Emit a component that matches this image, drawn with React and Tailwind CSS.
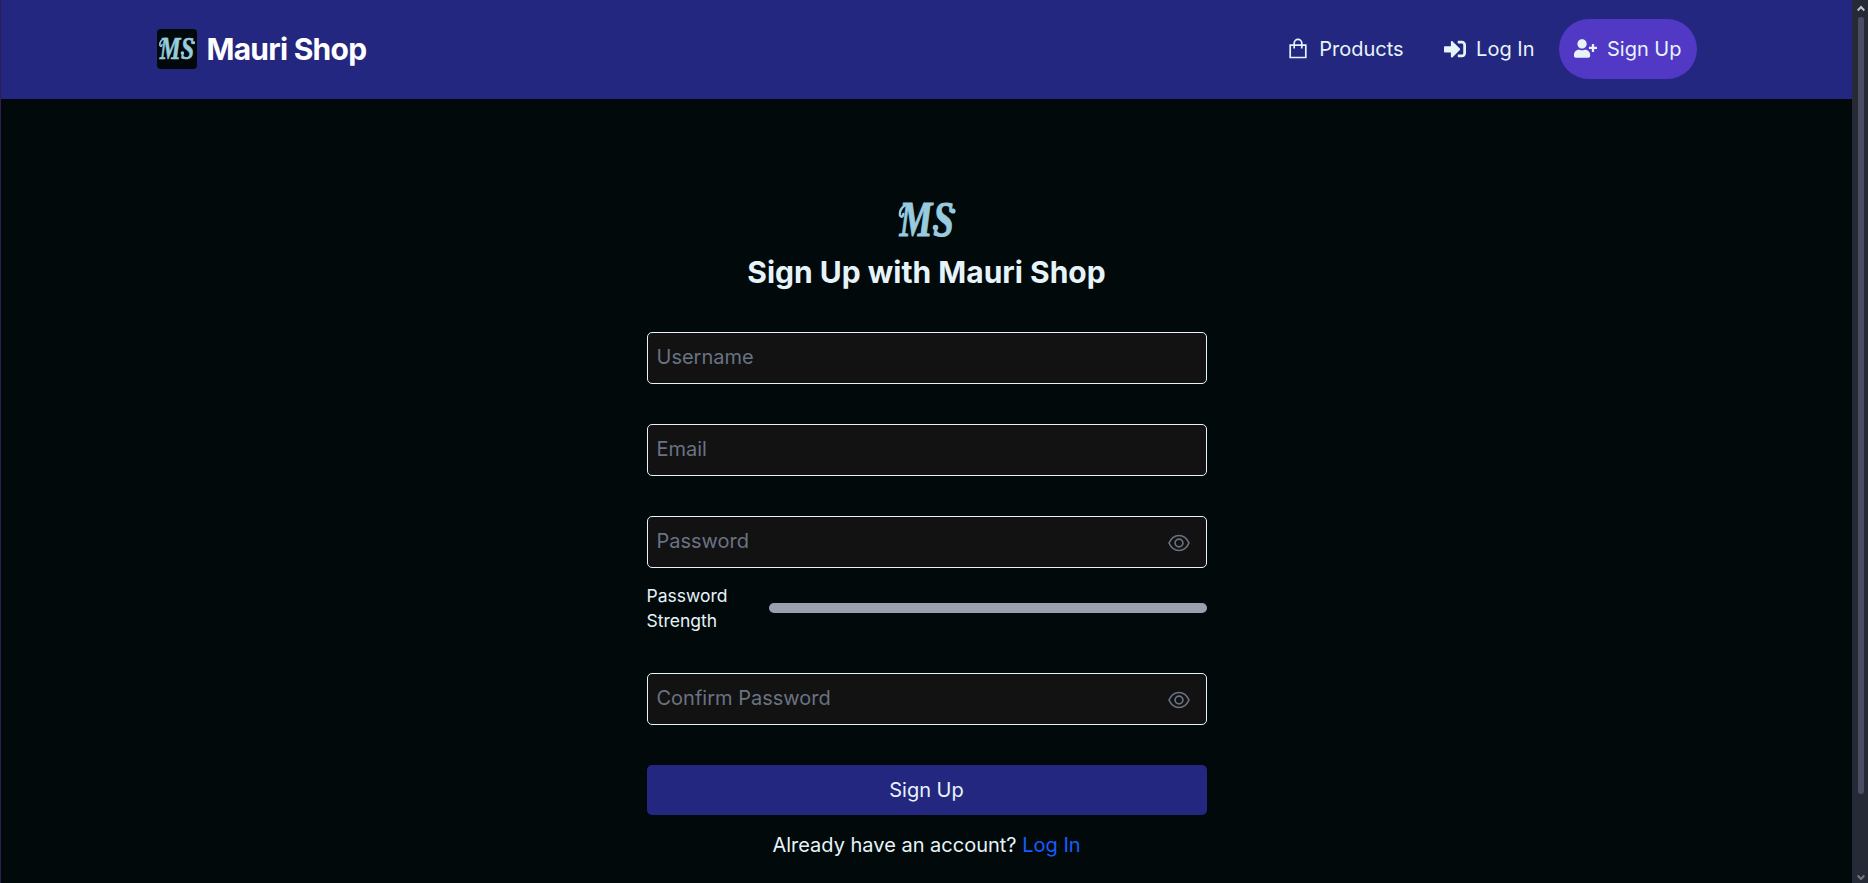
import { FaSignInAlt, FaUserPlus } from "react-icons/fa";

function Monogram({ className }) {
  return (
    <svg viewBox="0 0 60 60" className={className} overflow="visible" role="img" aria-label="MS">
      <text x="3.500 49" y="45.500" transform="scale(.74 1)" fontFamily="Liberation Serif, serif" fontStyle="italic" fontWeight="700" fontSize="50" fill="#97cbdd" stroke="#97cbdd" strokeWidth="1">MS</text>
      <path d="M13 13.200C6.500 13 2 19 3 24.500q2.400 3 3.400-1.500" fill="none" stroke="#97cbdd" strokeWidth="2.400" strokeLinecap="round" />
      <circle cx="56" cy="20" r="2.600" fill="#97cbdd" />
      <circle cx="38.500" cy="36.500" r="2.800" fill="#97cbdd" />
    </svg>
  );
}

function BagIcon() {
  return (
    <svg viewBox="0 0 18 21" className="h-[21px] w-[18px]" fill="none" stroke="currentColor" strokeWidth="1.700">
      <path d="M1.2 7.200h15.600v12.300H1.2zM5.200 10.500V5.200a3.800 3.800 0 0 1 7.600 0v5.300" />
    </svg>
  );
}

function EyeIcon() {
  return (
    <svg viewBox="0 0 22 18" className="h-[18px] w-[22px] shrink-0 text-[#6a7282]" fill="none" stroke="currentColor" strokeWidth="1.700">
      <path d="M1 9C3.2 4.2 6.7 1.5 11 1.5S18.8 4.2 21 9c-2.200 4.800-5.700 7.500-10 7.500S3.200 13.800 1 9Z" />
      <circle cx="11" cy="9" r="3.900" />
    </svg>
  );
}

function Field({ label, type = "text", reveal = false }) {
  return (
    <div className="flex h-[52px] w-full items-center rounded-[5px] border border-[#e6f4fa] bg-[#121212] pr-[15.500px] pl-[9px]">
      <input type={type} placeholder={label} className="min-w-0 flex-1 bg-transparent pb-[2px] text-[20px] leading-[30px] outline-none placeholder:text-[#6a7282]" />
      {reveal && <button type="button" aria-label="Show password" className="mt-[2px]"><EyeIcon /></button>}
    </div>
  );
}

function Scrollbar() {
  return (
    <div className="flex w-4 shrink-0 flex-col items-center bg-[#262936] pt-[5px] pb-[2px] pl-[2px]">
      <svg viewBox="0 0 8 7" className="h-[7px] w-2 text-[#c0c0c3]" fill="none" stroke="currentColor" strokeWidth="2"><path d="M.7 5.500 4 2l3.300 3.500" /></svg>
      <div className="mt-[5px] h-[777px] w-[6px] rounded-full bg-[#4a4d64]" />
      <svg viewBox="0 0 8 7" className="mt-auto h-[7px] w-2 text-[#77777a]" fill="none" stroke="currentColor" strokeWidth="2"><path d="M.7 1.500 4 5l3.300-3.500" /></svg>
    </div>
  );
}

export default function App() {
  return (
    <div className="flex h-[883px] w-full overflow-hidden bg-[#02090a] font-['Inter',sans-serif] text-[20px] leading-[30px] text-[#e6f4fa]">
      <div className="flex min-w-0 flex-1 flex-col border-l border-[#2f1d50]">
        <header className="flex h-[99px] shrink-0 items-center justify-between bg-[#24277f] pr-[155px] pb-[2px] pl-[156px]">
          <a href="#" className="flex items-center gap-[9.500px]">
            <span className="flex size-10 items-center justify-center rounded-[4px] bg-[#02090a]"><Monogram className="size-[38px] overflow-visible" /></span>
            <span className="text-[30px] leading-10 font-bold tracking-[-0.75px] text-white">Mauri Shop</span>
          </a>
          <nav className="flex items-center">
            <a href="#" className="flex items-center gap-3 pr-10"><BagIcon />Products</a>
            <a href="#" className="flex items-center gap-[10.500px] pr-[24.500px]"><FaSignInAlt className="size-[22px]" />Log In</a>
            <a href="#" className="flex h-[60px] items-center gap-[10px] rounded-full bg-[#5138c5] pr-[15.500px] pl-[15px]"><FaUserPlus className="h-[19px] w-[23px]" />Sign Up</a>
          </nav>
        </header>
        <main className="flex flex-col items-center pt-[92px]">
          <Monogram className="size-[60px] overflow-visible" />
          <h1 className="mt-px text-[30px] leading-10 font-bold">Sign Up with Mauri Shop</h1>
          <form className="mt-10 flex w-[560px] flex-col">
            <div className="flex flex-col gap-10">
              <Field label="Username" />
              <Field label="Email" />
              <Field label="Password" type="password" reveal />
            </div>
            <div className="mt-[15px] flex items-center text-[17.5px] leading-[25px]">
              <span className="w-[122px] pr-5">Password Strength</span>
              <span className="h-[10px] flex-1 rounded-full bg-[#99a1af]" />
            </div>
            <div className="mt-10"><Field label="Confirm Password" type="password" reveal /></div>
            <button type="button" className="mt-10 h-[50px] rounded-[5px] bg-[#24277f]">Sign Up</button>
            <p className="mt-[15px] text-center">Already have an account? <a href="#" className="text-[#155dfc]">Log In</a></p>
          </form>
        </main>
      </div>
      <Scrollbar />
    </div>
  );
}
